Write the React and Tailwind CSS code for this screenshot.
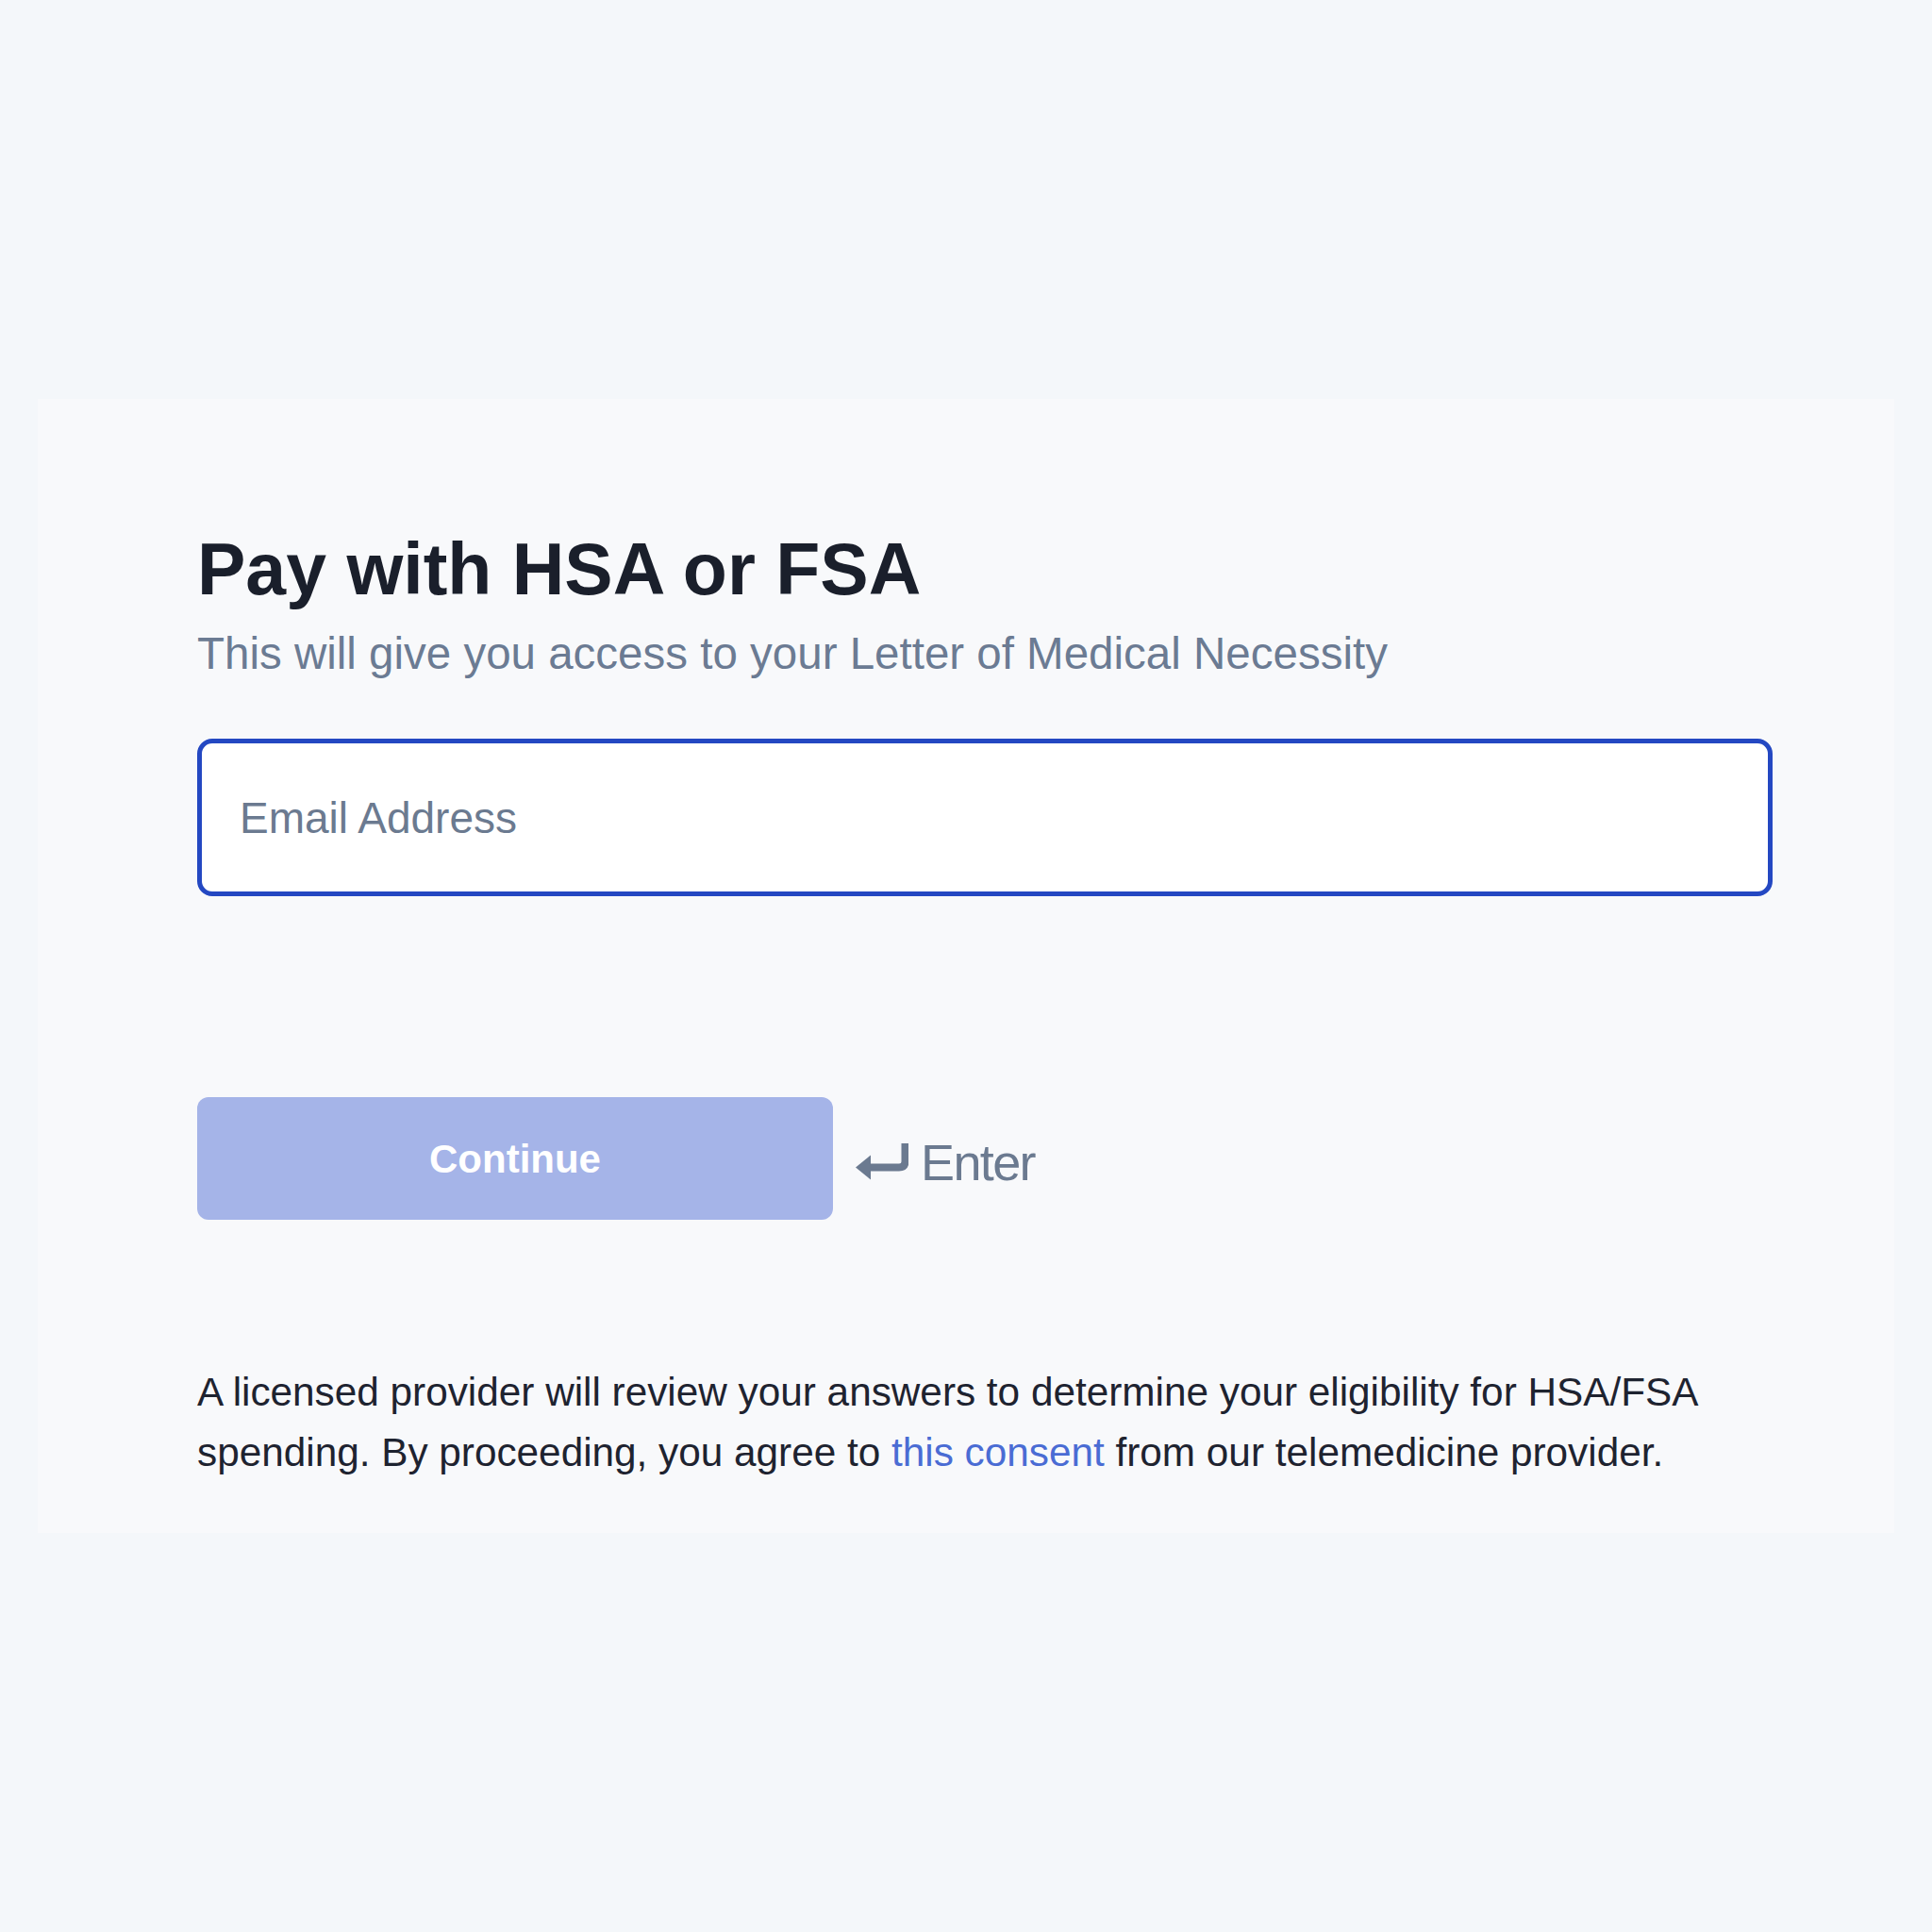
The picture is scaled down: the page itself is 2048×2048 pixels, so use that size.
// HSA / FSA email capture step
const FONT = "font-['Liberation_Sans',Arial,sans-serif]";

function EnterIcon() {
  return (
    <svg width="56" height="40" viewBox="0 0 56 40" fill="none" className="shrink-0">
      <polygon points="0,25.5 16,12.5 16,38.5" fill="#6b7a90" />
      <path d="M14 25.5 H46 Q52.5 25.5 52.5 19 V0" stroke="#6b7a90" strokeWidth="8" />
    </svg>
  );
}

export default function App() {
  return (
    <div className={`min-h-screen flex items-center justify-center bg-[#f4f7fa] ${FONT}`}>
      <div className="w-[1968px] bg-[#f8f9fb] pl-[169px] pt-[142px] pb-[53px]">
        <div className="w-[1670px]">
          {/* Header */}
          <h1 className="text-[77px] leading-[76px] font-bold text-[#1a1f2b]">
            Pay with HSA or FSA
          </h1>
          <p className="mt-[28px] text-[47.5px] leading-[47px] text-[#6b7b93]">
            This will give you access to your Letter of Medical Necessity
          </p>

          {/* Email */}
          <input
            type="email"
            placeholder="Email Address"
            className="mt-[67px] block w-full h-[167px] rounded-[16px] border-[5px] border-[#2448c2] bg-white px-[40px] text-[46px] text-[#1e2330] placeholder:text-[#6b7a90] outline-none"
          />

          {/* Actions */}
          <div className="mt-[213px] flex items-center">
            <button
              disabled
              className="w-[674px] h-[130px] rounded-[12px] bg-[#a5b4e8] text-white text-[42px] font-bold"
            >
              Continue
            </button>
            <div className="ml-[24px] mt-[8px] flex items-center gap-[13px]">
              <EnterIcon />
              <span className="text-[54px] leading-[54px] tracking-[-0.03em] text-[#6b7a90]">Enter</span>
            </div>
          </div>

          {/* Consent */}
          <p className="mt-[151px] text-[42.3px] leading-[64px] text-[#1e2330]">
            A licensed provider will review your answers to determine your eligibility for HSA/FSA
            spending. By proceeding, you agree to{" "}
            <a href="#" className="text-[#4a6cd4]">this consent</a> from our telemedicine provider.
          </p>
        </div>
      </div>
    </div>
  );
}
